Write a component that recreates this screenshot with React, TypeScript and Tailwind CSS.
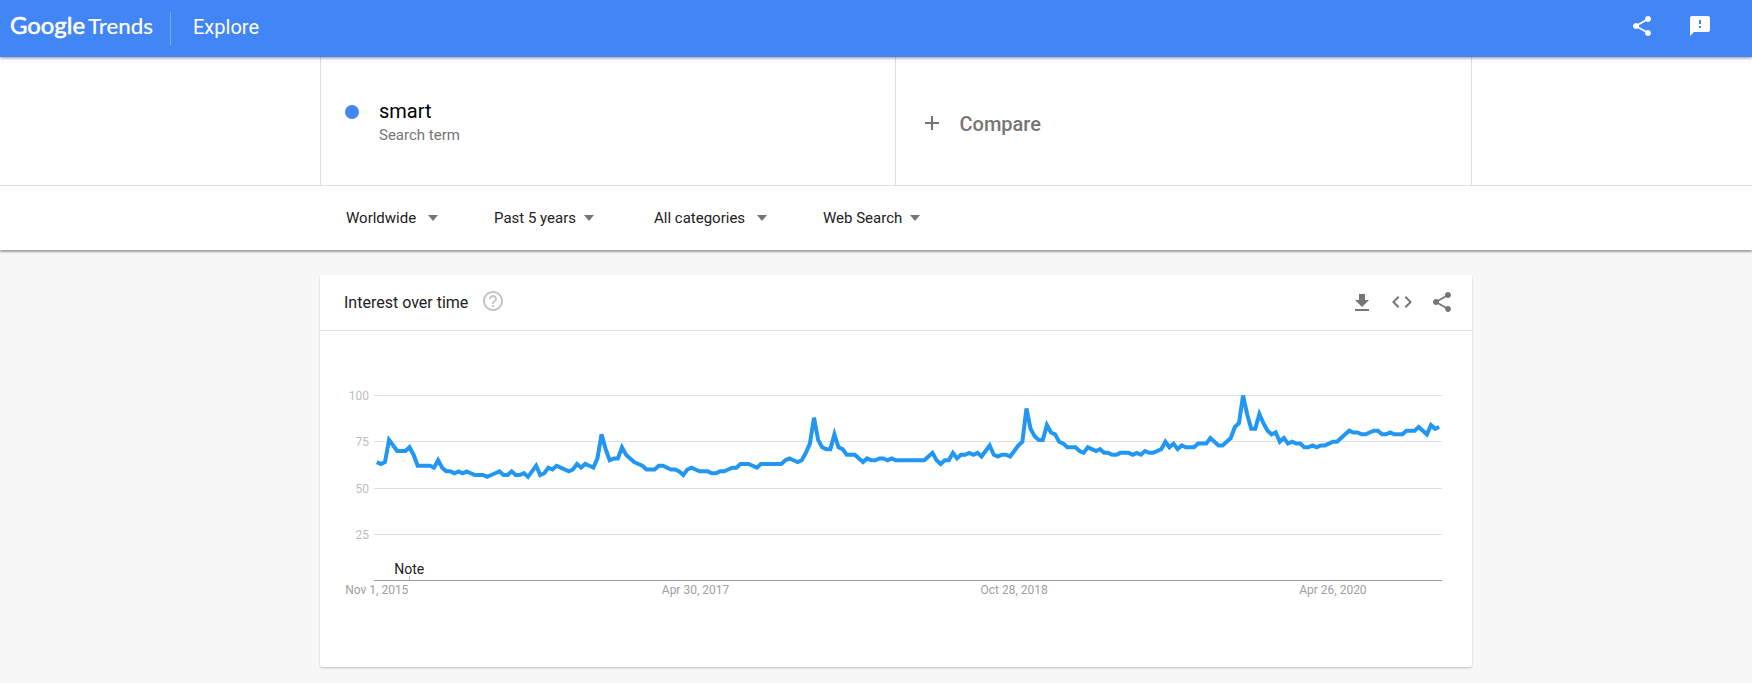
import React from "react";
import { MdAdd, MdCode, MdFeedback, MdGetApp, MdHelpOutline, MdShare } from "react-icons/md";

// weekly values, starting Nov 1, 2015
const interest = [
  64, 63, 64, 76, 73, 70, 70, 70, 72, 68, 62, 62, 62, 62, 61, 65, 61, 59, 59, 58,
  59, 58, 59, 58, 57, 57, 57, 56, 57, 58, 59, 57, 57, 59, 57, 57, 58, 56, 59, 62,
  57, 58, 61, 60, 62, 61, 60, 59, 60, 63, 61, 63, 62, 61, 66, 79, 71, 65, 66, 66,
  72, 68, 66, 64, 63, 62, 60, 60, 60, 62, 62, 61, 60, 60, 59, 57, 60, 61, 60, 59,
  59, 59, 58, 58, 59, 59, 60, 61, 61, 63, 63, 63, 62, 61, 63, 63, 63, 63, 63, 63,
  65, 66, 65, 64, 65, 69, 74, 88, 76, 72, 71, 71, 79, 72, 71, 68, 68, 68, 66, 64,
  66, 65, 65, 66, 66, 65, 66, 65, 65, 65, 65, 65, 65, 65, 65, 67, 69, 65, 63, 65,
  65, 69, 66, 68, 68, 69, 68, 69, 67, 70, 73, 68, 67, 68, 68, 67, 70, 73, 75, 93,
  82, 78, 76, 76, 84, 80, 79, 75, 74, 72, 72, 72, 70, 69, 72, 71, 70, 71, 69, 69,
  68, 68, 69, 69, 69, 68, 69, 68, 70, 69, 69, 70, 71, 75, 72, 74, 71, 73, 72, 72,
  72, 74, 74, 74, 77, 75, 73, 73, 75, 77, 83, 85, 100, 90, 82, 82, 90, 85, 81, 79,
  80, 75, 77, 74, 75, 74, 74, 72, 72, 73, 72, 73, 73, 74, 75, 75, 77, 79, 81, 80,
  80, 79, 79, 80, 81, 81, 79, 79, 80, 79, 79, 79, 81, 81, 81, 83, 81, 79, 84, 82,
  83,
];

const gridLines = [
  { label: "100", y: 64.5 },
  { label: "75", y: 110.5 },
  { label: "50", y: 157.5 },
  { label: "25", y: 203.5 },
];

const dates = [
  { label: "Nov 1, 2015", week: 0 },
  { label: "Apr 30, 2017", week: 78 },
  { label: "Oct 28, 2018", week: 156 },
  { label: "Apr 26, 2020", week: 234 },
];

const filters = [
  { label: "Worldwide", box: "w-[148px]", text: "w-[82px]" },
  { label: "Past 5 years", box: "w-[160px]", text: "w-[90px]" },
  { label: "All categories", box: "w-[169px]", text: "w-[103px]" },
  { label: "Web Search", box: "w-[120px]", text: "w-[87px]" },
];

const weekX = (week: number) => 56.8 + week * 4.086;
const valueY = (value: number) => 249.5 - value * 1.85;

function Logo() {
  return (
    <svg width="143" height="32" viewBox="0 0 143 32" className="fill-white">
      <text x="0" y="23" fontFamily="Lato" fontSize="24" stroke="#fff" strokeWidth="0.6" textLength="75" lengthAdjust="spacingAndGlyphs">
        Google
      </text>
      <text x="78" y="23" fontFamily="Lato" fontSize="22" stroke="#fff" strokeWidth="0.2" textLength="65" lengthAdjust="spacingAndGlyphs">
        Trends
      </text>
    </svg>
  );
}

function Header() {
  return (
    <header className="relative z-10 flex h-[57px] items-center bg-[#4285f4] text-white shadow-[0_1px_3px_rgba(0,0,0,0.45)]">
      <div className="flex flex-1 items-center pl-[10px]">
        <div className="pb-[3px]">
          <Logo />
        </div>
        <div className="ml-[17px] h-[33px] w-px bg-white/30" />
        <span className="ml-[22px] pb-[3px] text-[20px] leading-[24px]">Explore</span>
      </div>
      <div className="flex gap-[34px] pr-10 pb-[5px]">
        <MdShare size={24} />
        <MdFeedback size={24} />
      </div>
    </header>
  );
}

function Terms() {
  return (
    <div className="border-b border-[#dfdfdf] bg-white">
      <div className="ml-[320px] flex h-32 w-[1152px] border-x border-[#dfdfdf]">
        <div className="flex w-[575px] border-r border-[#dfdfdf] pt-[42px] pl-[23.5px]">
          <div className="mt-[5.5px] h-[14px] w-[14px] rounded-full bg-[#4285f4]" />
          <div className="ml-[20.5px]">
            <div className="text-[20px] leading-[24px] text-black">smart</div>
            <div className="text-[15px] leading-[24px] text-[#757575]">Search term</div>
          </div>
        </div>
        <div className="flex items-center pt-[3px] pl-6 text-[#757575]">
          <MdAdd size={24} />
          <span className="pt-[3px] pl-[15.5px] text-[20px] font-medium">Compare</span>
        </div>
      </div>
    </div>
  );
}

function Filters() {
  return (
    <div className="flex h-16 items-center bg-white pl-[346px] shadow-[0_2px_2px_rgba(0,0,0,0.36)]">
      {filters.map((filter) => (
        <div key={filter.label} className={`flex items-center ${filter.box}`}>
          <span className={`whitespace-nowrap text-[15px] text-[#212121] ${filter.text}`}>{filter.label}</span>
          <svg width="10" height="6" viewBox="0 0 10 6" className="fill-[#757575]">
            <path d="M0 0h10L5 6z" />
          </svg>
        </div>
      ))}
    </div>
  );
}

function Chart() {
  const points = interest.map((value, i) => `${weekX(i)},${valueY(value)}`).join(" ");

  return (
    <svg width="1152" height="336" viewBox="0 0 1152 336" className="block">
      {gridLines.map((line) => (
        <g key={line.label}>
          <path d={`M54 ${line.y}H1122`} stroke="#e0e0e0" />
          <text x="49" y={line.y + 4.5} textAnchor="end" fontSize="12" fill="#bdbdbd">
            {line.label}
          </text>
        </g>
      ))}
      <path d="M89.5 245V249" stroke="#bdbdbd" />
      <path d="M54 249.5H1122" stroke="#9e9e9e" />
      <text x="89.3" y="243" textAnchor="middle" fontSize="14" fill="#222">
        Note
      </text>
      {dates.map((date) => (
        <text key={date.label} x={weekX(date.week)} y="263" textAnchor="middle" fontSize="12" fill="#9e9e9e">
          {date.label}
        </text>
      ))}
      <polyline points={points} fill="none" stroke="#2196f3" strokeWidth="4" />
    </svg>
  );
}

export default function App() {
  return (
    <div className="h-[683px] w-[1752px] overflow-hidden bg-[#f7f7f7] font-[Roboto,sans-serif]">
      <Header />
      <Terms />
      <Filters />
      <div className="mt-[25px] ml-[320px] w-[1152px] rounded-[2px] bg-white shadow-[0_1px_2px_rgba(0,0,0,0.24)]">
        <div className="flex h-14 items-center border-b border-[#dfdfdf] pr-[18px] pl-6">
          <h2 className="text-[16px] leading-[20px] text-[#212121]">Interest over time</h2>
          <MdHelpOutline size={24} className="mb-[3px] ml-[12.5px] text-[#c4c4c4]" />
          <div className="ml-auto flex gap-4 text-[#757575]">
            <MdGetApp size={24} className="mt-px" />
            <MdCode size={24} />
            <MdShare size={24} />
          </div>
        </div>
        <Chart />
      </div>
    </div>
  );
}
